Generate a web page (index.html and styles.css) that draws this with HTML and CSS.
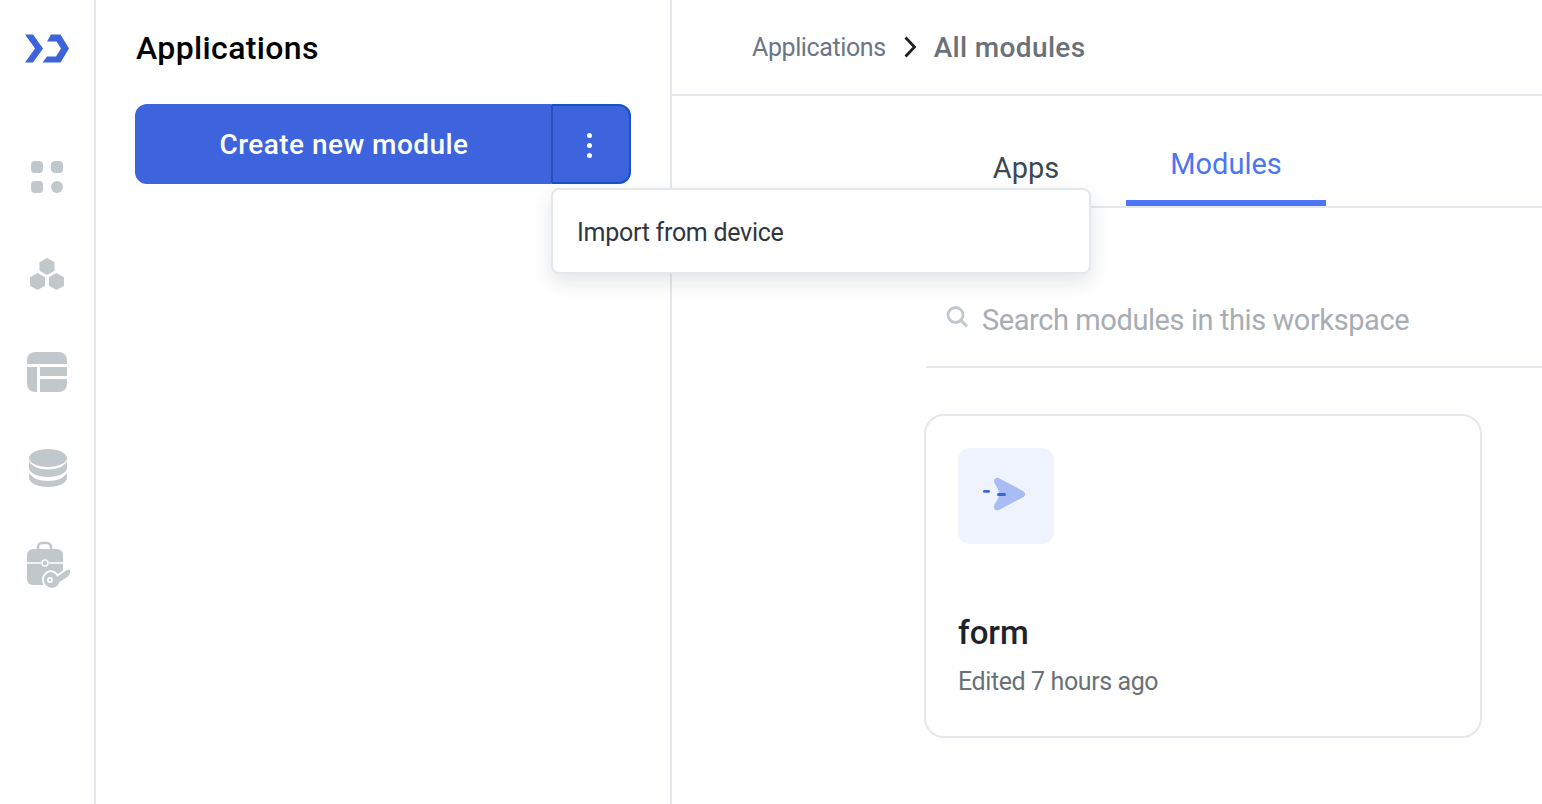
FILE: index.html
```html
<!DOCTYPE html>
<html lang="en">
<head>
<meta charset="utf-8">
<title>Applications</title>
<link rel="stylesheet" href="styles.css">
</head>
<body>
<div class="app">
  <nav class="rail">
    <svg class="logo" width="44" height="30" viewBox="0 0 44 30"><path fill="#3d63dd" d="M0 .5h8l10 14-10 14H0l10-14zM26 .5h9.500L44 14.500 35.500 28.500H17.500l4.500-6h9l5-8-4.500-7H22z"/></svg>
    <svg class="i i-apps" width="34" height="34" viewBox="0 0 34 34"><g fill="#c1c8cb"><rect x="1" y="1" width="12" height="12" rx="4"/><rect x="21" y="1" width="12" height="12" rx="4"/><rect x="1" y="21" width="12" height="12" rx="4"/><circle cx="27" cy="27" r="6"/></g></svg>
    <svg class="i i-hex" width="36" height="34" viewBox="0 0 36 34"><g fill="#c1c8cb"><path d="M18 1l7.500 4.300v8.400L18 18l-7.500-4.300V5.300z"/><path d="M8.500 16l7.500 4.300v8.400L8.500 33 1 28.700v-8.400z"/><path d="M27.500 16l7.500 4.300v8.400L27.500 33 20 28.700v-8.400z"/></g></svg>
    <svg class="i i-table" width="40" height="40" viewBox="0 0 40 40"><g fill="#c1c8cb"><path d="M0 12V8a8 8 0 0 1 8-8h24a8 8 0 0 1 8 8v4z"/><path d="M0 15h10v25H8a8 8 0 0 1-8-8z"/><path d="M13 15h27v9H13z"/><path d="M13 27h27v5a8 8 0 0 1-8 8H13z"/></g></svg>
    <svg class="i i-db" width="38" height="38" viewBox="0 0 38 38"><g fill="#c1c8cb"><ellipse cx="19" cy="9" rx="19" ry="9"/><path d="M0 12.500c3 5 10 8 19 8s16-3 19-8V19c0 5-9 9-19 9S0 24 0 19z"/><path d="M0 24c3 5 10 8 19 8s16-3 19-8v5c0 5-9 9-19 9S0 34 0 29z"/></g></svg>
    <svg class="i i-case" width="44" height="48" viewBox="0 0 44 48">
      <path fill="none" stroke="#c1c8cb" stroke-width="2.600" d="M12 9V6a4 4 0 0 1 4-4h5a4 4 0 0 1 4 4v3"/>
      <rect x="1" y="8" width="36" height="36" rx="6" fill="#c1c8cb"/>
      <path d="M1 22h14M23 22h14" stroke="#fff" stroke-width="1.500" fill="none"/>
      <circle cx="19" cy="22" r="3" fill="#c1c8cb" stroke="#fff" stroke-width="1.500"/>
      <path fill="#c1c8cb" stroke="#fff" stroke-width="3.500" paint-order="stroke" fill-rule="evenodd" d="M24 31a8 8 0 0 1 7.300 4.700l6-4.200c1.800-1.300 3.500-2.500 5.700-3l1 .5c.3 3-1 6-3.500 7.500l-7 4.500A8 8 0 1 1 24 31zm0 5a3 3 0 1 0 0 6 3 3 0 0 0 0-6z"/>
    </svg>
  </nav>
  <aside class="side">
    <h1 class="side-title">Applications</h1>
    <div class="split">
      <button class="split-main">Create new module</button>
      <button class="split-more" aria-label="More"><span></span><span></span><span></span></button>
    </div>
  </aside>
  <main class="main">
    <header class="crumbs">
      <span class="crumb">Applications</span>
      <svg class="chev" width="14" height="22" viewBox="0 0 14 22"><path d="M2.500 1.500 11.500 11l-9 9.500" fill="none" stroke="#1b2026" stroke-width="2.800"/></svg>
      <span class="crumb-now">All modules</span>
    </header>
    <div class="tabs">
      <span class="tab">Apps</span>
      <span class="tab tab-on">Modules</span>
    </div>
    <div class="content">
      <div class="search">
        <svg width="22" height="22" viewBox="0 0 22 22"><circle cx="9.500" cy="9" r="7.500" fill="none" stroke="#c1c8cb" stroke-width="2.800"/><path d="M15 14.500l6 6" stroke="#c1c8cb" stroke-width="3" fill="none"/></svg>
        <span class="search-text">Search modules in this workspace</span>
      </div>
      <article class="card">
        <div class="card-icon">
          <svg width="96" height="96" viewBox="0 0 96 96"><path fill="#a9bdf5" d="M36 34c-.6-3 2.500-5 5-3.800L65 43c2.800 1.500 2.800 4.800 0 6.200L41 62c-2.500 1.200-5.800-1-5-4 1-3.500 5-7 5-12s-4-9-5-12z"/><rect x="25" y="42" width="7" height="2.800" rx="1.400" fill="#3d63dd"/><rect x="39" y="45" width="9" height="3" rx="1.500" fill="#3d63dd"/></svg>
        </div>
        <h2 class="card-name">form</h2>
        <p class="card-meta">Edited 7 hours ago</p>
      </article>
    </div>
  </main>
</div>
<div class="menu">Import from device</div>
</body>
</html>
```
FILE: styles.css
```css
* { box-sizing: border-box; }
html, body { margin: 0; height: 100%; overflow: hidden; background: #fff; }
body { font-family: "Roboto", "Liberation Sans", sans-serif; position: relative; }
.app { display: grid; grid-template-columns: 96px 576px 1fr; height: 804px; }
.rail { border-right: 2px solid #e4e7ec; display: flex; flex-direction: column; align-items: center; padding-top: 34px; }
.i-apps { margin-top: 96px; }
.i-hex { margin-top: 63px; }
.i-table { margin-top: 61px; }
.i-db { margin-top: 57px; margin-left: 2px; }
.i-case { margin-top: 54px; margin-left: 2px; }
.side { border-right: 2px solid #e4e7ec; padding: 30px 39px 0 39px; }
.side-title { margin: 0 0 37px 1px; font-size: 32px; line-height: 37px; font-weight: 500; color: #000; letter-spacing: .37px; }
.split { display: flex; height: 80px; width: 496px; }
.split-main { flex: 1; border: 0; background: #3d63dd; color: #fff; font: 500 28px "Roboto", sans-serif; letter-spacing: .45px; border-radius: 12px 0 0 12px; padding: 0 0 0 2px; }
.split-more { width: 80px; background: #3d63dd; border: 2px solid #1553c7; border-left-color: #2c50b8; border-radius: 0 12px 12px 0; display: flex; flex-direction: column; align-items: center; justify-content: center; gap: 5px; padding: 3px 4px 0 0; }
.split-more span { width: 5px; height: 5px; border-radius: 50%; background: #fff; }
.main { min-width: 0; }
.crumbs { height: 96px; border-bottom: 2px solid #e4e7ec; display: flex; align-items: center; padding-left: 80px; }
.crumb { font-size: 25px; color: #6a7585; letter-spacing: -.4px; }
.chev { margin: 0 17px 0 17px; }
.crumb-now { font-size: 28px; font-weight: 500; color: #6a7178; letter-spacing: .35px; }
.tabs { height: 112px; border-bottom: 2px solid #e4e7ec; display: flex; padding-left: 254px; }
.tab { width: 200px; font-size: 29px; color: #3c4852; text-align: center; padding-top: 54px; line-height: 36px; }
.tab-on { color: #4c75f6; padding-top: 50px; border-bottom: 6px solid #4c75f6; height: 110px; width: 200px; }
.content { padding-left: 254px; }
.search { height: 160px; border-bottom: 2px solid #e4e7ec; display: flex; align-items: center; padding: 66px 0 0 20px; gap: 14px; }
.search svg { margin-top: -6px; }
.search-text { font-size: 29px; color: #a8adb3; letter-spacing: -.42px; }
.card { margin: 46px 0 0 -2px; width: 558px; height: 324px; border: 2px solid #e4e7ec; border-radius: 20px; padding: 32px; }
.card-icon { width: 96px; height: 96px; background: #eff3fe; border-radius: 12px; display: flex; align-items: center; justify-content: center; }
.card-name { margin: 69px 0 0; font-size: 33px; line-height: 40px; font-weight: 500; color: #1f242a; }
.card-meta { margin: 13px 0 0; font-size: 25px; line-height: 32px; color: #6a7178; letter-spacing: -.4px; }
.menu { position: absolute; left: 551px; top: 188px; width: 540px; height: 86px; background: #fff; border: 2px solid #e4e7ec; border-radius: 8px; box-shadow: 0 8px 20px rgba(30, 40, 60, .12); padding: 2px 0 0 24px; display: flex; align-items: center; font-size: 25px; color: #30363d; letter-spacing: -.28px; }
```
